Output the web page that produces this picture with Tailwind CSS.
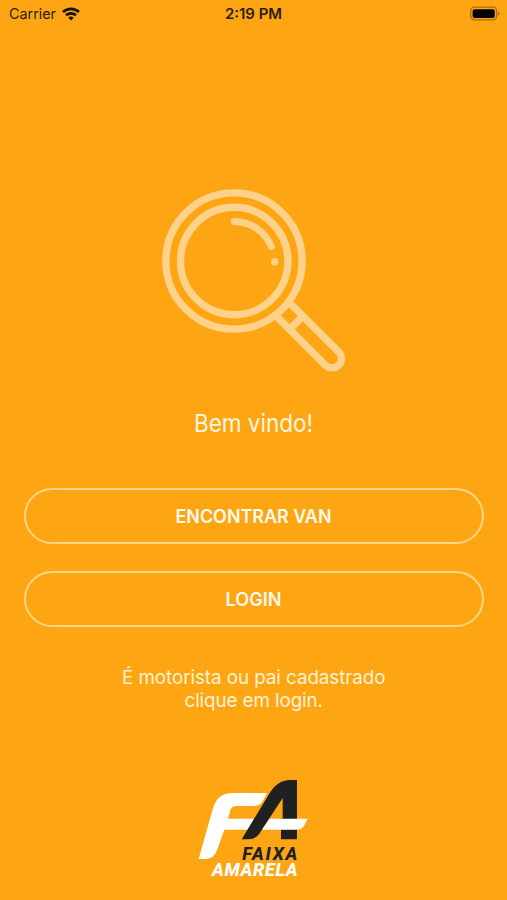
<!DOCTYPE html>
<html lang="pt-BR">
<head>
<meta charset="utf-8">
<title>Faixa Amarela</title>
<script src="https://cdn.jsdelivr.net/npm/@tailwindcss/browser@4"></script>
</head>
<body class="bg-[#fea513]">
<div class="flex h-[900px] w-[507px] flex-col items-center overflow-hidden bg-[#fea513] font-['Inter',sans-serif] text-[#fff8e8]">
  <header class="grid h-7 w-full shrink-0 grid-cols-3 items-center pr-[7px] pl-[9px] text-[#2b1c05]">
    <div class="flex items-center gap-[6px]">
      <svg class="order-2 h-[14px] w-[18px]" viewBox="0 0 18 14" fill="none" stroke="#1a1000" stroke-width="2.7">
        <path d="M1 5a11.6 11.6 0 0 1 16 0"/>
        <path d="M4 8.3a7.3 7.3 0 0 1 10 0"/>
        <path d="M9 13.4 6.3 10.7a4 4 0 0 1 5.4 0Z" fill="#1a1000" stroke="none"/>
      </svg>
      <svg class="h-5 w-[47px]" viewBox="0 0 47 20"><text x="0" y="15" font-size="14.3" textLength="47" lengthAdjust="spacingAndGlyphs" fill="#2b1c05">Carrier</text></svg>
    </div>
    <svg class="h-5 w-[58px] justify-self-center" viewBox="0 0 58 20"><text x="0" y="15" font-size="14.3" font-weight="600" textLength="57" lengthAdjust="spacingAndGlyphs" fill="#2b1c05">2:19 PM</text></svg>
    <svg class="h-4 w-[31px] justify-self-end" viewBox="0 0 31 16">
      <rect x="1.7" y="1.2" width="26" height="12.6" rx="3.8" fill="none" stroke="#a96d10" stroke-width="1.3"/>
      <rect x="3.6" y="3.2" width="22.2" height="8.8" rx="2" fill="#050300"/>
      <path d="M29 5.5v4q1.5-.7 1.5-2T29 5.5Z" fill="#a96d10"/>
    </svg>
  </header>

  <main class="flex w-full flex-col items-center pt-[160px]">
    <svg class="h-[186px] w-[188px]" viewBox="160 188 188 186" fill="none" stroke="#fed28a" stroke-width="7.4">
      <circle cx="234" cy="261" r="68.1"/>
      <circle cx="234.2" cy="261" r="53.7"/>
      <path d="M234.3 221.4A40 40 0 0 1 271.3 246.5" stroke-linecap="round" stroke-width="7"/>
      <circle cx="274.7" cy="261.7" r="3.8" fill="#fed28a" stroke="none"/>
      <path d="M289.8 303 338.65 351.85A9.4 9.4 0 0 1 325.35 365.15L276.4 316.2M302.9 316.1 289.6 329.4"/>
    </svg>

    <h1 class="mt-[32px] flex h-9 items-center">
      <svg class="h-9 w-[130px]" viewBox="0 0 130 36"><text x="5" y="26" font-size="24.3" textLength="119" lengthAdjust="spacingAndGlyphs" fill="#fff6df">Bem vindo!</text></svg>
    </h1>

    <div class="mt-[46px] flex w-full flex-col gap-[27px] pr-[23px] pl-6">
      <button class="flex h-14 items-center justify-center rounded-[28px] border-2 border-[#ffd684]">
        <svg class="h-6 w-[158px]" viewBox="0 0 158 24"><text x="0.5" y="18.8" font-size="18" font-weight="600" textLength="156" lengthAdjust="spacingAndGlyphs" fill="#fffaf0">ENCONTRAR VAN</text></svg>
      </button>
      <button class="flex h-14 items-center justify-center rounded-[28px] border-2 border-[#ffd684]">
        <svg class="h-6 w-[58px]" viewBox="0 0 58 24"><text x="0.5" y="18.8" font-size="18" font-weight="600" textLength="56" lengthAdjust="spacingAndGlyphs" fill="#fffaf0">LOGIN</text></svg>
      </button>
    </div>

    <svg class="mt-[38px] h-[50px] w-[270px]" viewBox="0 0 270 50" font-size="18.8" fill="#fff3d6">
      <text x="3" y="19" textLength="263.5">É motorista ou pai cadastrado</text>
      <text x="65.5" y="42" textLength="138.5">clique em login.</text>
    </svg>
  </main>

  <footer class="mt-[55px]">
    <svg class="h-[115px] w-[130px]" viewBox="0 0 390 345" role="img" aria-label="Faixa Amarela">
      <path d="M29 267 72 114Q86 69 130 69H234L221 94Q213 108 193 108H143Q128 108 124 121L117 146H215L196 179H106L85 238Q77 267 49 267Z" fill="#fff"/>
      <path d="M158 208 239 74Q264 30 303 30H324V208H276V146H281V84L212 190Q200 208 180 208Z" fill="#202020"/>
      <path d="M241 146H356L345 167Q338 179 321 179H219Z" fill="#fff"/>
      <g font-family="Roboto" font-weight="800" font-style="italic">
        <text x="160" y="269" font-size="54" textLength="165" fill="#202020">FAIXA</text>
        <text x="69" y="317" font-size="54" textLength="257" fill="#fff">AMARELA</text>
      </g>
    </svg>
  </footer>
</div>
</body>
</html>
